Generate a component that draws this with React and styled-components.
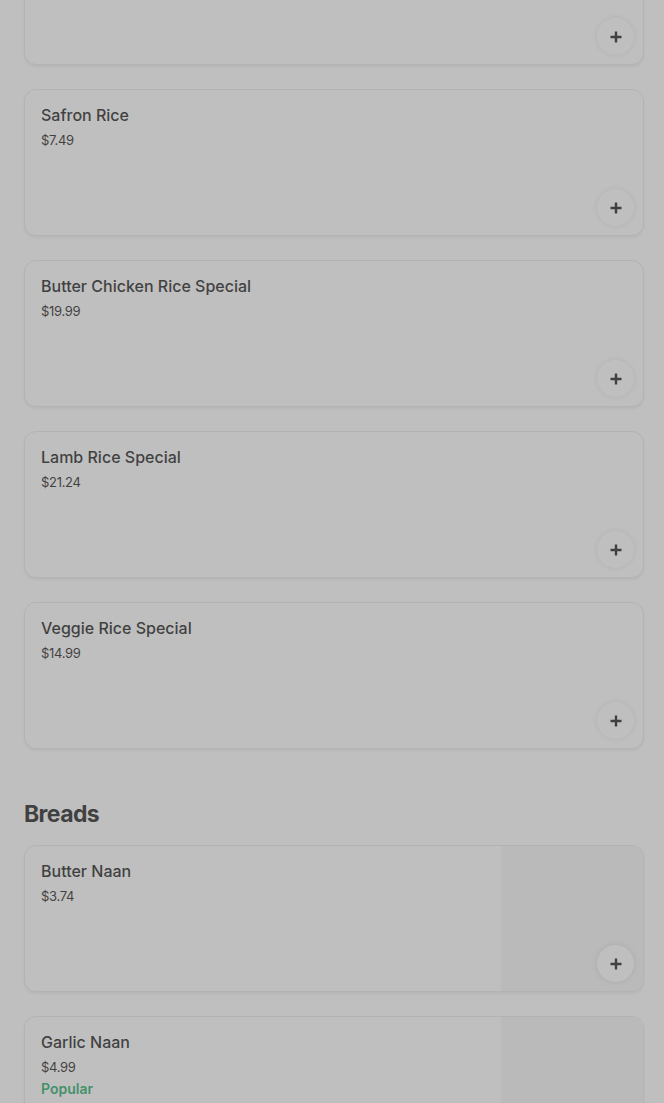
import React from "react";
import styled, { createGlobalStyle } from "styled-components";

const Global = createGlobalStyle`
  html, body { margin: 0; padding: 0; background: #ffffff; }
  body { font-family: Inter, "Noto Sans", sans-serif; color: #000000; overflow: hidden; }
`;

const Page = styled.main`
  padding: 0 20px 0 24px;
  margin-top: -82px;
  display: flex;
  flex-direction: column;
`;

const Section = styled.section`
  display: flex;
  flex-direction: column;
  gap: 24px;
  margin-bottom: ${(p) => p.$mb || 0}px;
`;

const Heading = styled.h2`
  margin: 4px 0 -9px;
  font-size: 23px;
  line-height: 32px;
  font-weight: 700;
  letter-spacing: -0.6px;
  color: #000;
`;

const Card = styled.article`
  position: relative;
  box-sizing: border-box;
  height: 147px;
  border: 1px solid #e6e6e6;
  border-radius: 12px;
  background: #ffffff;
  box-shadow: 0 2px 3px rgba(0, 0, 0, 0.08);
  display: flex;
  overflow: hidden;
`;

const Info = styled.div`
  flex: 1;
  padding: 14px 16px;
  display: flex;
  flex-direction: column;
`;

const Title = styled.div`
  font-size: 16px;
  line-height: 22px;
  font-weight: 500;
  color: #000;
`;

const Price = styled.div`
  margin-top: 3px;
  font-size: 13px;
  line-height: 22px;
  font-weight: 400;
  letter-spacing: -0.3px;
  color: #000;
`;

const Badge = styled.div`
  font-size: 14px;
  line-height: 22px;
  font-weight: 600;
  color: #05a357;
`;

const Thumb = styled.div`
  width: 142px;
  flex: none;
  background: #f4f4f4;
`;

const AddButton = styled.button`
  position: absolute;
  right: 9px;
  bottom: 9px;
  width: 37px;
  height: 37px;
  border-radius: 50%;
  border: none;
  padding: 0;
  background: #ffffff;
  box-shadow: 0 0 6px rgba(0, 0, 0, 0.12);
  display: flex;
  align-items: center;
  justify-content: center;
  cursor: pointer;
`;

const Overlay = styled.div`
  position: fixed;
  inset: 0;
  background: rgba(128, 128, 128, 0.5);
  pointer-events: none;
`;

const PlusIcon = () => (
  <svg width="14" height="14" viewBox="0 0 14 14" aria-hidden="true">
    <path d="M7 1.5v11M1.5 7h11" stroke="#000" strokeWidth="2.4" />
  </svg>
);

const Item = ({ name, price, popular, image }) => (
  <Card>
    <Info>
      {name && <Title>{name}</Title>}
      {price && <Price>{price}</Price>}
      {popular && <Badge>Popular</Badge>}
    </Info>
    {image && <Thumb />}
    <AddButton aria-label={name ? `Add ${name}` : "Add item"}>
      <PlusIcon />
    </AddButton>
  </Card>
);

const rice = [
  { id: "prev" },
  { id: "safron", name: "Safron Rice", price: "$7.49" },
  { id: "bcrs", name: "Butter Chicken Rice Special", price: "$19.99" },
  { id: "lrs", name: "Lamb Rice Special", price: "$21.24" },
  { id: "vrs", name: "Veggie Rice Special", price: "$14.99" },
];

const breads = [
  { id: "bn", name: "Butter Naan", price: "$3.74", image: true },
  { id: "gn", name: "Garlic Naan", price: "$4.99", popular: true, image: true },
];

export default function App() {
  return (
    <>
      <Global />
      <Page>
        <Section $mb={45}>
          {rice.map((it) => (
            <Item key={it.id} {...it} />
          ))}
        </Section>
        <Section>
          <Heading>Breads</Heading>
          {breads.map((it) => (
            <Item key={it.id} {...it} />
          ))}
        </Section>
      </Page>
      <Overlay />
    </>
  );
}
